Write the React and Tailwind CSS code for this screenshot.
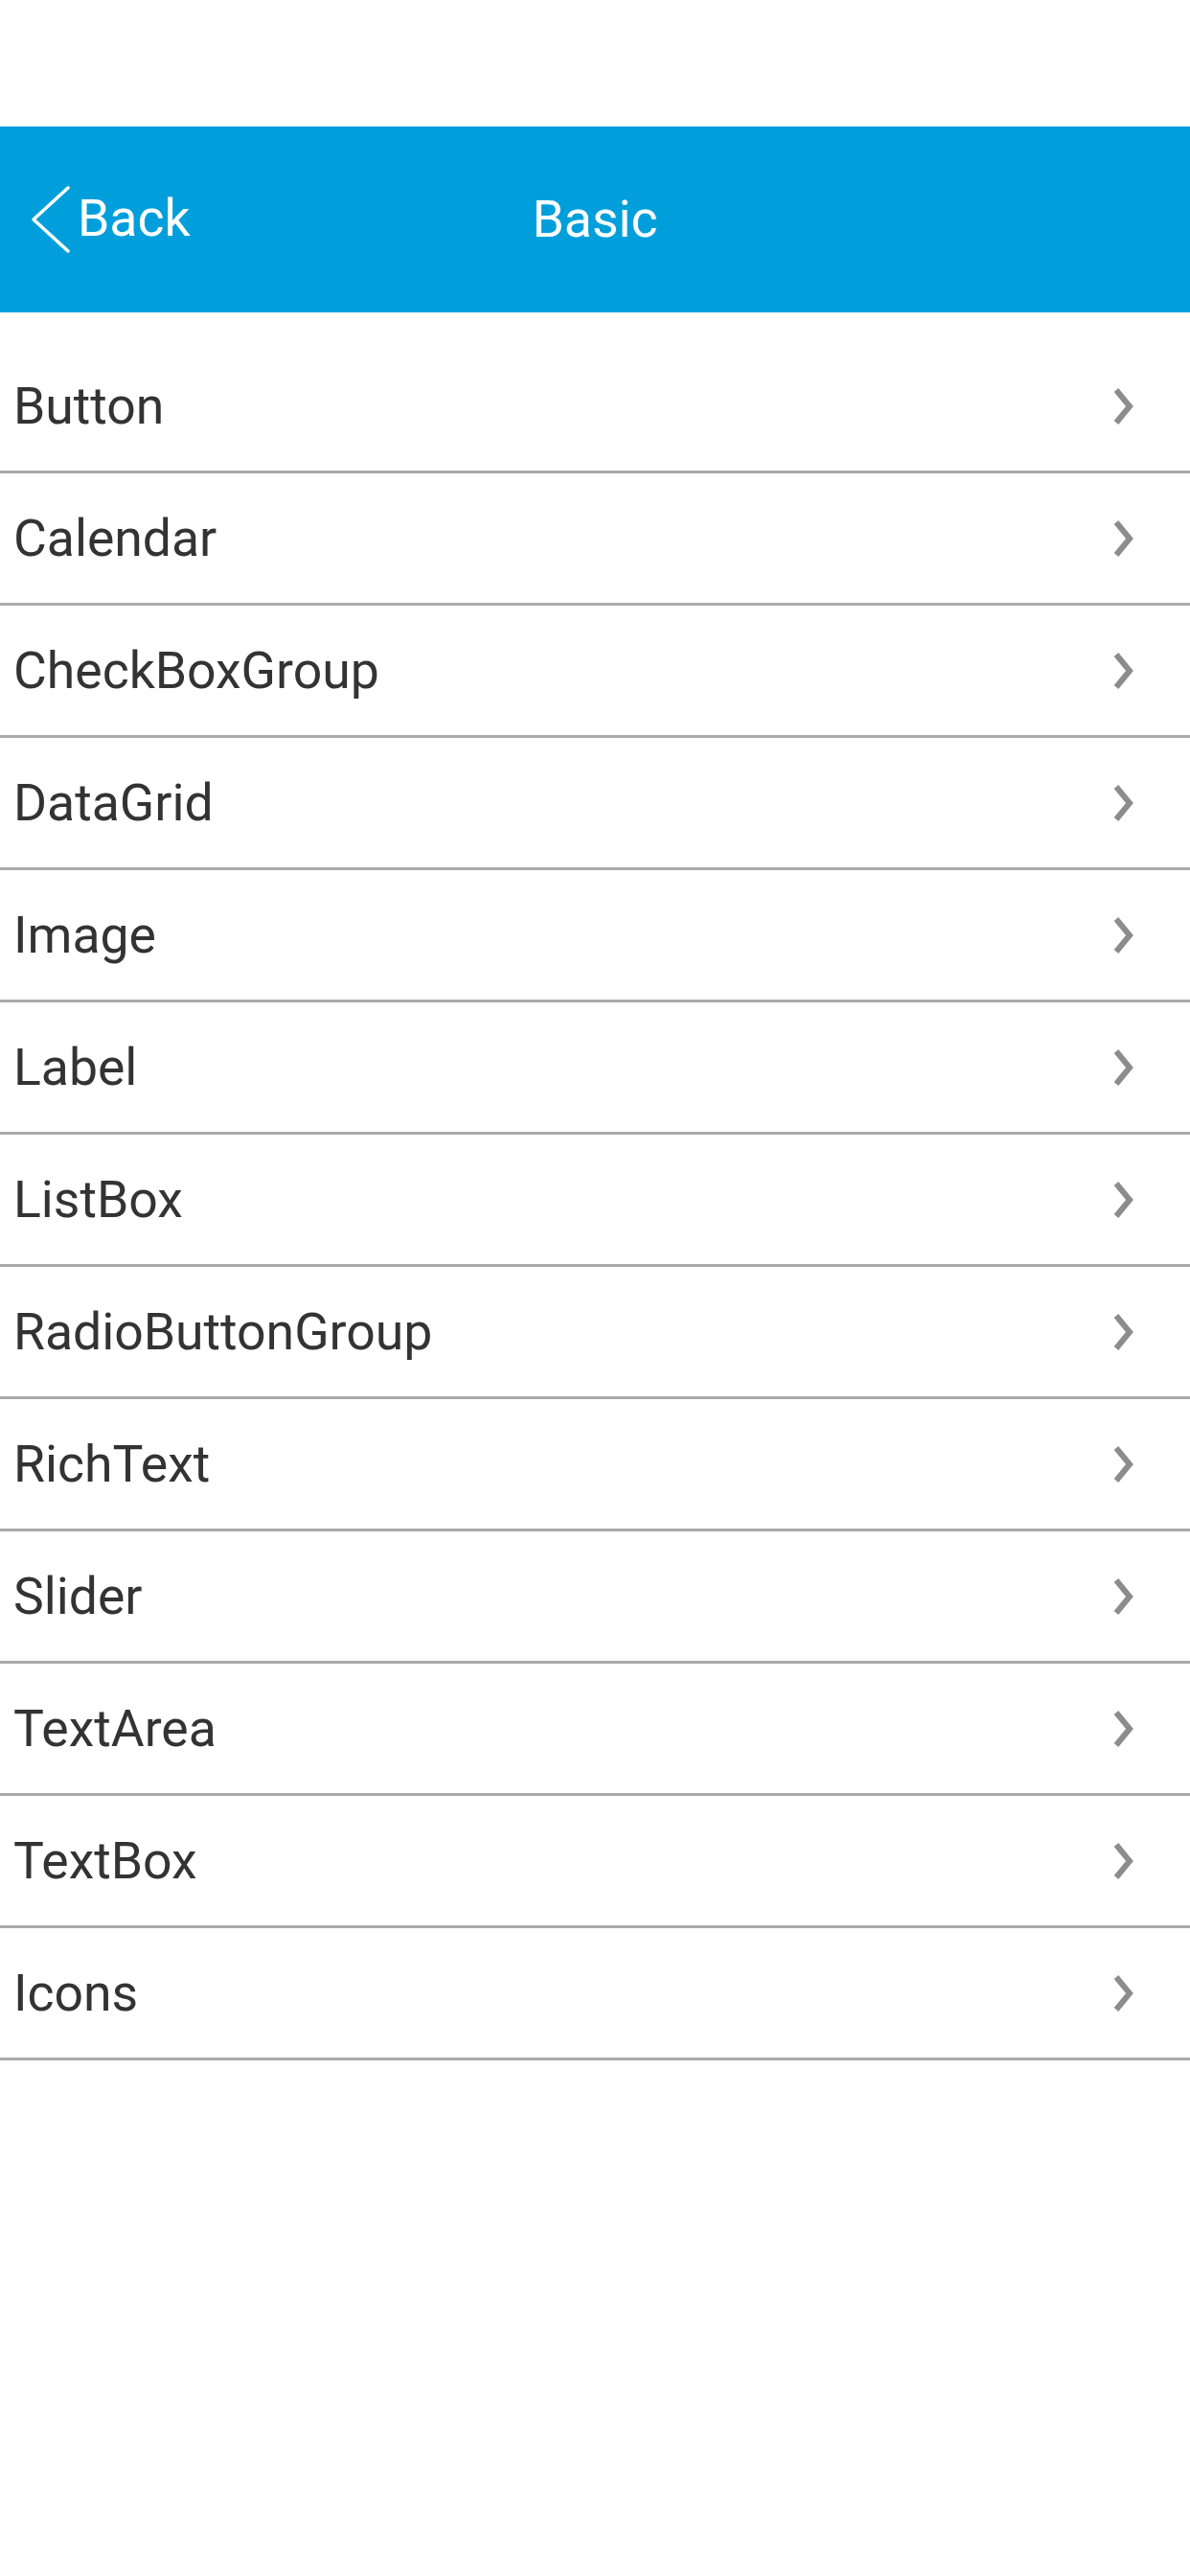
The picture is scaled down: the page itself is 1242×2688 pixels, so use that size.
const items = [
  "Button",
  "Calendar",
  "CheckBoxGroup",
  "DataGrid",
  "Image",
  "Label",
  "ListBox",
  "RadioButtonGroup",
  "RichText",
  "Slider",
  "TextArea",
  "TextBox",
  "Icons",
];

function RowChevron() {
  return (
    <svg width="24" height="40" viewBox="0 0 24 40" className="block">
      <polyline
        points="4,3 18,20 4,37"
        fill="none"
        stroke="#8c8c8c"
        strokeWidth="6"
        strokeLinejoin="miter"
      />
    </svg>
  );
}

export default function App() {
  return (
    <div className="w-[1242px] min-h-[2688px] bg-white font-['Roboto',sans-serif]">
      <div className="h-[132px]" />
      <header className="h-[194px] bg-[#009fdb] grid grid-cols-[1fr_auto_1fr] items-center text-white">
        <button className="flex items-center pl-[32px] text-[53.5px] leading-none">
          <svg width="42" height="72" viewBox="0 0 42 72" className="block">
            <polyline
              points="39,3 3,36 39,69"
              fill="none"
              stroke="white"
              strokeWidth="3.5"
              strokeLinecap="round"
              strokeLinejoin="round"
            />
          </svg>
          <span className="ml-[7px] -mt-[2px]">Back</span>
        </button>
        <h1 className="text-[53.5px] leading-none font-normal">Basic</h1>
        <div />
      </header>
      <ul className="mt-[30px]">
        {items.map((name) => (
          <li
            key={name}
            className="h-[138px] border-b-[3px] border-[#aaaaaa] flex items-center justify-between pl-[14px] pr-[57px]"
          >
            <span className="text-[53.5px] text-[#333333] leading-none">{name}</span>
            <RowChevron />
          </li>
        ))}
      </ul>
    </div>
  );
}
